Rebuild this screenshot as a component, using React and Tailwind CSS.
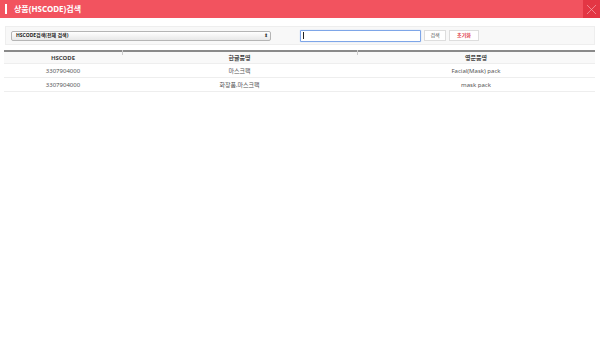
import { X } from 'lucide-react'

const rows = [
  { code: '3307904000', kr: '마스크팩', en: 'Facial(Mask) pack' },
  { code: '3307904000', kr: '화장품,마스크팩', en: 'mask pack' },
]

export default function App() {
  return (
    <div
      className="h-[339px] w-[600px] overflow-hidden bg-white"
      style={{ fontFamily: '"Noto Sans", "Noto Sans CJK KR", sans-serif' }}
    >
      {/* title bar */}
      <div className="flex h-[18px] items-center bg-[#f2535f]">
        <div className="ml-[5px] h-[10px] w-[2px] bg-white" />
        <div className="ml-[7px] text-[8px] font-bold leading-none text-white">상품(HSCODE)검색</div>
        <div className="ml-auto flex h-[18px] w-[17px] items-center justify-center bg-[#e33644]">
          <X size={17} strokeWidth={1} className="text-[#f7a6ad]" />
        </div>
      </div>

      {/* search box */}
      <div className="mx-[5px] mt-[8px] flex h-[19px] items-center border border-[#eeeeee] bg-[#f8f8f8] px-[5px]">
        <div className="flex h-[10px] w-[260px] items-center rounded-[2px] border border-[#b5b5b5] bg-gradient-to-b from-white to-[#e8e8e8] pl-[4px] pr-[2px]">
          <span className="text-[5px] font-bold leading-none text-[#222]">HSCODE검색(전체 검색)</span>
          <span className="ml-auto text-[5px] leading-none text-[#333]">⬍</span>
        </div>
        <div className="ml-[29px] flex h-[12px] w-[121px] items-center rounded-[1px] border border-[#7ea6e8] bg-white pl-[2px] shadow-[0_0_1px_#8fb3f0]">
          <div className="h-[7px] w-px bg-[#222]" />
        </div>
        <button className="ml-[3px] flex h-[11px] w-[22px] items-center justify-center border border-[#dddddd] bg-white text-[5px] leading-none text-[#555]">
          검색
        </button>
        <button className="ml-[3px] flex h-[11px] w-[30px] items-center justify-center border border-[#dddddd] bg-white text-[5px] font-bold leading-none text-[#e03a45]">
          초기화
        </button>
      </div>

      {/* table */}
      <div className="mx-[4px] mt-[5px] w-[591px] border-t-2 border-[#8a8a8a]">
        <div className="grid h-[12px] grid-cols-[118px_235px_238px] items-center border-b border-[#eeeeee] bg-[#f9f9f9] text-[6px] font-bold leading-none text-[#444]">
          <div className="text-center">HSCODE</div>
          <div className="relative text-center">
            <span className="absolute left-0 top-[-5px] h-[5px] w-px bg-[#ccc]" />
            한글품명
          </div>
          <div className="relative text-center">
            <span className="absolute left-0 top-[-5px] h-[5px] w-px bg-[#ccc]" />
            영문품명
          </div>
        </div>
        {rows.map((r, i) => (
          <div
            key={i}
            className="grid h-[14px] grid-cols-[118px_235px_238px] items-center border-b border-[#eeeeee] text-[6px] leading-none text-[#555]"
          >
            <div className="text-center">{r.code}</div>
            <div className="text-center">{r.kr}</div>
            <div className="text-center">{r.en}</div>
          </div>
        ))}
      </div>
    </div>
  )
}
